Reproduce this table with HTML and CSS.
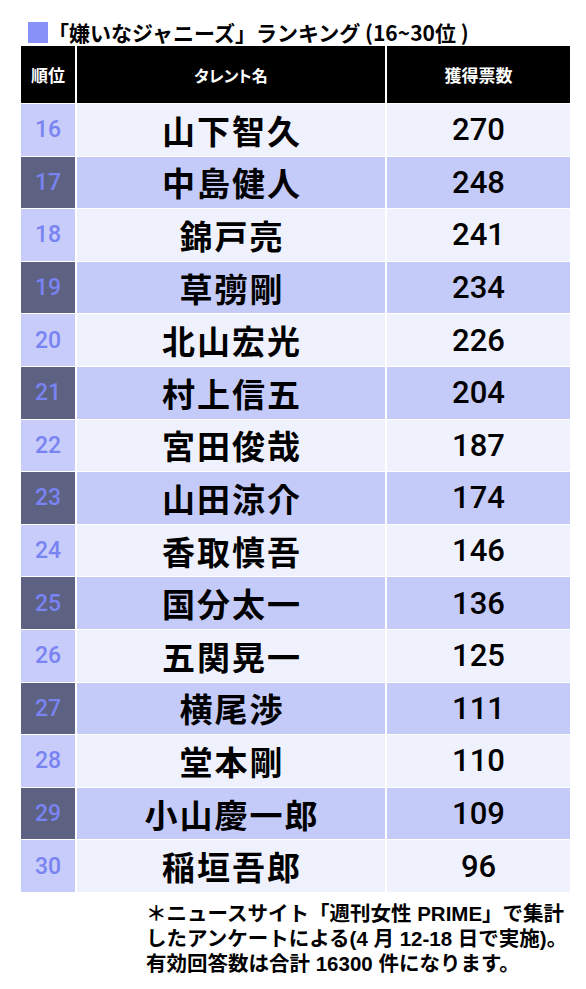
FILE: index.html
```html
<!DOCTYPE html>
<html lang="ja">
<head>
<meta charset="utf-8">
<link rel="stylesheet" href="styles.css">
</head>
<body>
<div class="title"><span class="sq"></span><span class="title-text">「嫌いなジャニーズ」ランキング (16~30位 )</span></div>
<div class="table">
  <div class="th th-rank">順位</div>
  <div class="th th-name">タレント名</div>
  <div class="th th-votes">獲得票数</div>

  <div class="rank l">16</div><div class="name l">山下智久</div><div class="votes l">270</div>
  <div class="rank d">17</div><div class="name d">中島健人</div><div class="votes d">248</div>
  <div class="rank l">18</div><div class="name l">錦戸亮</div><div class="votes l">241</div>
  <div class="rank d">19</div><div class="name d">草彅剛</div><div class="votes d">234</div>
  <div class="rank l">20</div><div class="name l">北山宏光</div><div class="votes l">226</div>
  <div class="rank d">21</div><div class="name d">村上信五</div><div class="votes d">204</div>
  <div class="rank l">22</div><div class="name l">宮田俊哉</div><div class="votes l">187</div>
  <div class="rank d">23</div><div class="name d">山田涼介</div><div class="votes d">174</div>
  <div class="rank l">24</div><div class="name l">香取慎吾</div><div class="votes l">146</div>
  <div class="rank d">25</div><div class="name d">国分太一</div><div class="votes d">136</div>
  <div class="rank l">26</div><div class="name l">五関晃一</div><div class="votes l">125</div>
  <div class="rank d">27</div><div class="name d">横尾渉</div><div class="votes d">111</div>
  <div class="rank l">28</div><div class="name l">堂本剛</div><div class="votes l">110</div>
  <div class="rank d">29</div><div class="name d">小山慶一郎</div><div class="votes d">109</div>
  <div class="rank l">30</div><div class="name l">稲垣吾郎</div><div class="votes l">96</div>
</div>
<div class="note">
  <div class="note-line">＊ニュースサイト「週刊女性 PRIME」で集計</div>
  <div class="note-line">したアンケートによる(4 月 12-18 日で実施)。</div>
  <div class="note-line">有効回答数は合計 16300 件になります。</div>
</div>
</body>
</html>
```

FILE: styles.css
```css
html, body {
  margin: 0;
  padding: 0;
  background: #ffffff;
}
body {
  width: 586px;
  height: 989px;
  overflow: hidden;
  font-family: "Noto Sans CJK JP", "Liberation Sans", sans-serif;
  color: #000;
}
.title {
  display: flex;
  align-items: center;
  gap: 0;
  margin: 0 0 0 28px;
  padding-top: 20px;
  height: 25px;
  margin-bottom: 1px;
}
.sq {
  width: 20px;
  height: 21px;
  background: #8891f7;
  flex: none;
}
.title-text {
  font-size: 21px;
  font-weight: 700;
  line-height: 25px;
  letter-spacing: 0;
}
.table {
  display: grid;
  grid-template-columns: 54px 308px 183px;
  grid-template-rows: 57px repeat(15, 51.6px);
  column-gap: 2px;
  row-gap: 1px;
  margin-left: 21px;
  width: 549px;
}
.th {
  background: #000;
  color: #fff;
  font-weight: 700;
  font-size: 17px;
  display: flex;
  align-items: center;
  justify-content: center;
  font-feature-settings: "palt";
}
.th-name {
  font-size: 16px;
}
.rank {
  display: flex;
  align-items: center;
  justify-content: center;
  font-family: Roboto, "Liberation Sans", sans-serif;
  font-weight: 500;
  font-size: 23px;
  color: #7983f2;
}
.rank.l { background: #c7ccfa; }
.rank.d { background: #5d6182; }
.name, .votes {
  display: flex;
  align-items: center;
  justify-content: center;
}
.name.l, .votes.l { background: #eff1fd; }
.name.d, .votes.d { background: #c5cbf8; }
.name {
  font-size: 33px;
  font-weight: 700;
  letter-spacing: 2px;
  padding-left: 2px;
}
.votes {
  font-family: Roboto, "Liberation Sans", sans-serif;
  font-size: 31px;
  font-weight: 500;
}
.note {
  margin: 9px 0 0 146px;
  display: flex;
  flex-direction: column;
}
.note-line {
  font-family: "Liberation Sans", "Noto Sans CJK JP", sans-serif;
  font-size: 20.5px;
  font-weight: 700;
  line-height: 25px;
  height: 25px;
  white-space: nowrap;
}
```
